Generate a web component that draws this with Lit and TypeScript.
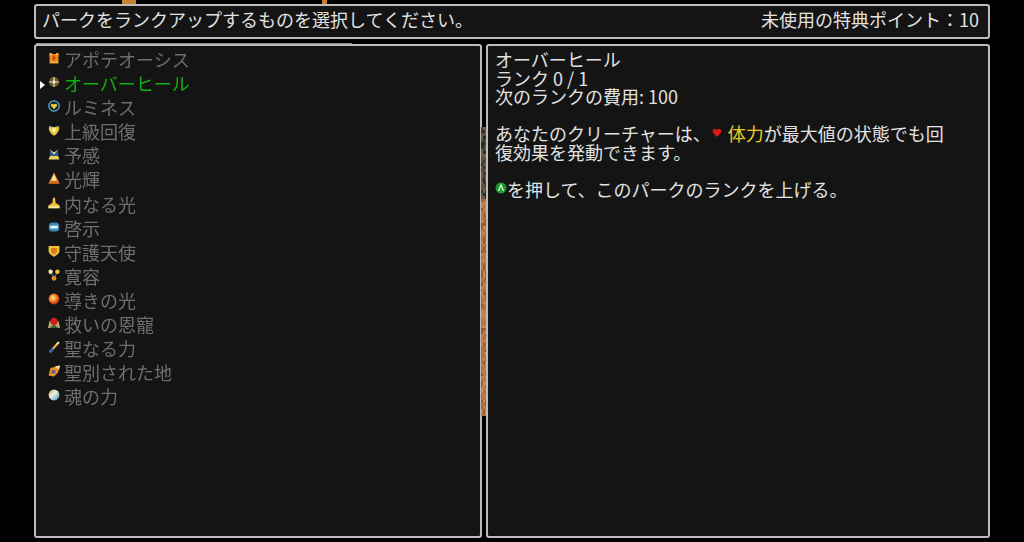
import { LitElement, html, css, svg } from "lit";
import { customElement } from "lit/decorators.js";

const icons: Record<string, unknown> = {
  apo: svg`<rect x="1.500" y="2" width="9" height="9.500" fill="#ea8a1c"/><path d="M1.500 1h2.500v2.500H1.500zM8 1h2.500v2.500H8z" fill="#f0a838"/><path d="M6 3 7.800 6 6 9.500 4.200 6z" fill="#d0401a"/><path d="M2 9.500h8V11H2z" fill="#f2b040"/>`,
  over: svg`<circle cx="6" cy="6" r="5" fill="#6a5c30"/><path d="M5.400 1h1.200v10H5.400zM1 5.400h10v1.200H1z" fill="#e8dcaa"/><circle cx="6" cy="6" r="1.400" fill="#fff8d8"/>`,
  lum: svg`<circle cx="6" cy="6" r="5.200" fill="#14242e" stroke="#54b8dc" stroke-width="1.200"/><path d="M6 9.300 2.900 5.800c-.4-2.300 2.200-2.800 3.100-1.100.9-1.700 3.500-1.200 3.100 1.100z" fill="#f4cc38"/>`,
  adv: svg`<path d="M1 2.500C3 1.500 4 3 6 3s3-1.500 5-.5c.8 4-1.800 7.500-5 9.300C2.800 10 .2 6.500 1 2.500z" fill="#e8c63c"/><path d="M3.500 4.500h5L6 9z" fill="#fff4bc"/><path d="M1 2.500 3 1.700 3.600 4zM11 2.500 9 1.700 8.400 4z" fill="#5a8cbc"/>`,
  fore: svg`<path d="M.5 11.500 2 8h8l1.500 3.500z" fill="#f0d060"/><path d="M1.500 3 6 6l4.500-3L10 8H2z" fill="#2c5c8c"/><path d="M1 1 6 4.500 11 1 6 6.500z" fill="#f8eaa8"/>`,
  rad: svg`<path d="M6 .5 11.500 11.500H.5z" fill="#f09a2c"/><path d="M6 3 8.500 8.500h-5z" fill="#fdebb4"/><path d="M1.500 9h9l1 2.500H.5z" fill="#d86820"/>`,
  inner: svg`<path d="M5 .8h2l.6 5.200L11.500 8.300v2.900H.5V8.300L4.400 6z" fill="#f2c23c"/><path d="M.5 9.300h11v1.900H.5z" fill="#fbe8a0"/>`,
  reve: svg`<rect x=".8" y="1.500" width="10.400" height="9" rx="3.500" fill="#3a88bc"/><rect x="2.300" y="4.700" width="7.400" height="2.800" fill="#eaf6fa"/>`,
  guard: svg`<path d="M.6 1h10.800v5c0 2.600-2.700 4.200-5.400 5.800C3.300 10.200.6 8.600.6 6z" fill="#f2c23a"/><path d="M3 3h6v3.300c0 1.600-1.500 2.500-3 3.300-1.500-.8-3-1.700-3-3.300z" fill="#d87c1e"/>`,
  clem: svg`<path d="M2.800 3 6 9.200 9.200 3" stroke="#3a5c98" stroke-width="1.400" fill="none"/><circle cx="2.600" cy="2.800" r="2.200" fill="#f9eaa4"/><circle cx="9.400" cy="2.800" r="2.200" fill="#f2c23a"/><circle cx="6" cy="9.300" r="2.400" fill="#ea9220"/>`,
  guide: svg`<defs><radialGradient id="g1" cx=".42" cy=".4" r=".62"><stop offset="0" stop-color="#ffeaa4"/><stop offset=".5" stop-color="#f4861f"/><stop offset="1" stop-color="#b02a10"/></radialGradient></defs><circle cx="6" cy="6" r="5.400" fill="url(#g1)"/>`,
  save: svg`<path d="M0 11 1.500 4l4.500 2.500L10.500 4 12 11z" fill="#bda96c"/><circle cx="6" cy="4.300" r="3.600" fill="#cc1f1c"/><path d="M1.500 11 6 7.500l4.500 3.500z" fill="#3f6034"/>`,
  holy: svg`<path d="M2 11 10.500 1.500" stroke="#f2b244" stroke-width="2.200"/><path d="M1.500 11.500 5 7.500" stroke="#3464bc" stroke-width="2.400"/><path d="M9 3.300 11 1" stroke="#f6e4b8" stroke-width="1.600"/>`,
  cons: svg`<path d="M2.500 3 12 .5 10 7.500 6 11.500.5 10.500z" fill="#e8902a"/><path d="M7 1.300 12 .5 10.800 5z" fill="#f9e29c"/><path d="M3.500 5h4v3.500h-4z" fill="#64666e"/>`,
  soul: svg`<defs><linearGradient id="g2" x1="0" y1="0" x2="1" y2="1"><stop offset="0" stop-color="#c8b868"/><stop offset=".45" stop-color="#eeeedc"/><stop offset="1" stop-color="#3494c8"/></linearGradient></defs><circle cx="6" cy="6" r="5.400" fill="url(#g2)"/>`,
};

const perks: [string, string][] = [
  ["apo", "アポテオーシス"],
  ["over", "オーバーヒール"],
  ["lum", "ルミネス"],
  ["adv", "上級回復"],
  ["fore", "予感"],
  ["rad", "光輝"],
  ["inner", "内なる光"],
  ["reve", "啓示"],
  ["guard", "守護天使"],
  ["clem", "寛容"],
  ["guide", "導きの光"],
  ["save", "救いの恩寵"],
  ["holy", "聖なる力"],
  ["cons", "聖別された地"],
  ["soul", "魂の力"],
];

/* Mottled texture of the strip of game world seen between the two panels. */
function dividerCells() {
  const cells: unknown[] = [];
  let seed = 7;
  const rnd = () => {
    seed = (seed * 16807) % 2147483647;
    return seed / 2147483647;
  };
  const dark = ["#4a4230", "#3e3a28", "#5c5238", "#3a3626", "#6a5a3c", "#2e2a1e", "#57503a", "#7a5c38"];
  const warm = ["#c47a42", "#b86e3a", "#c98148", "#b56c38", "#c98148", "#bd7440", "#cc8a50", "#9a5a2c"];
  for (let y = 0; y < 289; y += 3) {
    for (let x = 0; x < 5; x += 2) {
      const set = y < 71 ? dark : warm;
      cells.push(svg`<rect x=${x} y=${y} width="2" height="3" fill=${set[Math.floor(rnd() * set.length)]}/>`);
    }
  }
  return cells;
}

@customElement("app-root")
export class AppRoot extends LitElement {
  static styles = css`
    :host {
      display: block;
      width: 1024px;
      height: 542px;
      background: #000;
      overflow: hidden;
      font-family: "Noto Sans CJK JP", "Noto Sans", sans-serif;
      font-size: 18px;
      line-height: 24px;
      color: #e2e2e2;
    }
    .page {
      box-sizing: border-box;
      height: 542px;
      padding: 4px 34px;
      display: grid;
      grid-template-columns: 448px 504px;
      grid-template-rows: 35px 494px;
      column-gap: 4px;
      row-gap: 5px;
      position: relative;
      filter: blur(0.4px);
    }
    .panel {
      box-sizing: border-box;
      background: #141414;
      border: 2px solid #bcbcbc;
      border-radius: 3px;
    }
    .top {
      grid-column: 1 / 3;
      display: flex;
      justify-content: space-between;
      align-items: center;
      padding: 0 9px 5px 6px;
    }
    .list {
      padding: 1px 0 0 28px;
      color: #6e6e6e;
    }
    .row {
      height: 24.1px;
      position: relative;
      white-space: nowrap;
    }
    .row.sel {
      color: #12b012;
    }
    .icon {
      position: absolute;
      left: -16px;
      top: 5px;
      width: 12px;
      height: 12px;
    }
    .cursor {
      position: absolute;
      left: -24px;
      top: 10px;
      width: 5px;
      height: 8px;
    }
    .detail {
      padding: 4px 8px 0 7px;
      line-height: 18.5px;
    }
    .detail p {
      margin: 0;
      min-height: 18.5px;
    }
    .gold {
      color: #e8cc20;
    }
    .heart {
      display: inline-block;
      width: 10px;
      height: 9px;
      margin: 0 6px 0 1px;
      vertical-align: 4px;
    }
    .btn {
      display: inline-block;
      width: 12px;
      height: 12px;
      vertical-align: 3px;
    }
    .divider {
      position: absolute;
      left: 481px;
      top: 127px;
      width: 5px;
      height: 289px;
    }
    .scroll {
      position: absolute;
      left: 36px;
      top: 43px;
      width: 316px;
      height: 1px;
      background: #8a8a8a;
    }
    .spark {
      position: absolute;
      top: 0;
      left: 122px;
      width: 14px;
      height: 4px;
      background: #c48034;
    }
    .spark.small {
      left: 322px;
      width: 5px;
    }
  `;

  render() {
    return html`
      <div class="page">
        <div class="spark"></div>
        <div class="spark small"></div>
        <div class="panel top">
          <span>パークをランクアップするものを選択してください。</span>
          <span>未使用の特典ポイント：10</span>
        </div>
        <div class="panel list">
          ${perks.map(
            ([k, name]) => html`
              <div class="row ${k === "over" ? "sel" : ""}">
                ${k === "over"
                  ? html`<svg class="cursor" viewBox="0 0 5 8"><path d="M0 0 5 4 0 8z" fill="#fff"/></svg>`
                  : ""}
                <svg class="icon" viewBox="0 0 12 12">${icons[k]}</svg>${name}
              </div>
            `
          )}
        </div>
        <div class="panel detail">
          <p>オーバーヒール</p>
          <p>ランク 0 / 1</p>
          <p>次のランクの費用: 100</p>
          <p></p>
          <p>あなたのクリーチャーは、<svg class="heart" viewBox="0 0 12 11"><path d="M6 11 1 5.500C-.5 1.500 4-.5 6 2.500c2-3 6.500-1 5 3z" fill="#e0181c"/></svg><span class="gold">体力</span>が最大値の状態でも回</p>
          <p>復効果を発動できます。</p>
          <p></p>
          <p><svg class="btn" viewBox="0 0 12 12"><circle cx="6" cy="6" r="5.500" fill="#1e9a2a"/><path d="M3.500 9 6 3l2.500 6" fill="none" stroke="#d8f4d8" stroke-width="1.400"/></svg>を押して、このパークのランクを上げる。</p>
        </div>
        <svg class="divider" viewBox="0 0 5 289" shape-rendering="crispEdges">${dividerCells()}</svg>
        <div class="scroll"></div>
      </div>
    `;
  }
}
